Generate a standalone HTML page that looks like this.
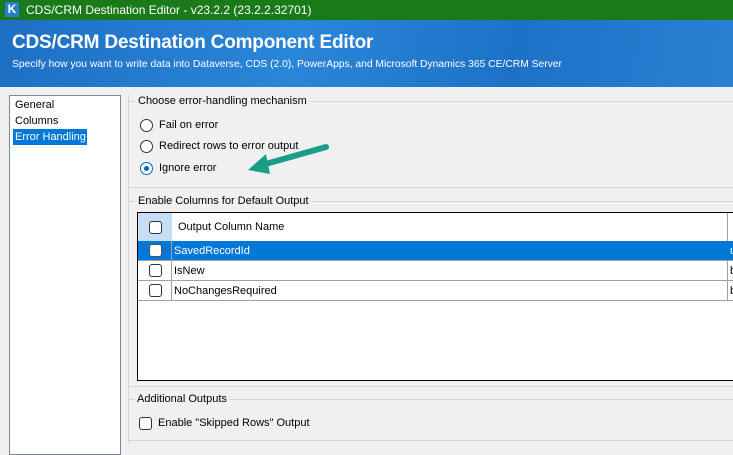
<!DOCTYPE html>
<html><head><style>
*{margin:0;padding:0;box-sizing:border-box}
body{width:733px;height:444px;overflow:hidden;background:#f0f0f0;font-family:"Liberation Sans",sans-serif;font-size:11px;color:#000;position:relative}
.a{position:absolute}
.t{position:absolute;white-space:nowrap;font-size:11px}
.radio{position:absolute;width:13px;height:13px;border:1px solid #333;border-radius:50%;background:#fff}
.cb{position:absolute;width:13px;height:13px;border:1px solid #333;border-radius:3px;background:#fff}
.hl{position:absolute;height:1px;background:#d5d5d5}
</style></head><body>
<div class="a" style="left:0;top:0;width:733px;height:20px;background:#1a7a1a"></div>
<div class="a" style="left:5px;top:2px;width:14px;height:15px;background:#2a7fd0;color:#fff;font-size:12px;font-weight:bold;text-align:center;line-height:15px">K</div>
<div class="t" style="left:26px;top:3px;color:#fff;font-size:12px">CDS/CRM Destination Editor - v23.2.2 (23.2.2.32701)</div>
<div class="a" style="left:0;top:20px;width:733px;height:67px;background:linear-gradient(100deg,#1e6fc4,#2a86d8 40%,#1d72c8 70%,#2a80d2)"></div>
<div class="t" style="left:12px;top:32px;color:#fff;font-size:19px;font-weight:bold;letter-spacing:-0.2px">CDS/CRM Destination Component Editor</div>
<div class="t" style="left:12px;top:59px;color:#fff;font-size:10.3px">Specify how you want to write data into Dataverse, CDS (2.0), PowerApps, and Microsoft Dynamics 365 CE/CRM Server</div>

<div class="a" style="left:9px;top:95px;width:112px;height:360px;background:#fff;border:1px solid #828790"></div>
<div class="t" style="left:15px;top:99px">General</div>
<div class="t" style="left:15px;top:115px">Columns</div>
<div class="a" style="left:13px;top:129px;width:74px;height:16px;background:#0078d7"></div>
<div class="t" style="left:15px;top:131px;color:#fff">Error Handling</div>

<div class="a" style="left:128px;top:95px;width:1px;height:349px;background:#d5d5d5"></div>
<div class="hl" style="left:128px;top:101px;width:605px"></div>
<div class="t" style="left:135px;top:95px;background:#f0f0f0;padding:0 3px">Choose error-handling mechanism</div>
<div class="hl" style="left:128px;top:187px;width:605px"></div>
<div class="radio" style="left:140px;top:119px"></div>
<div class="t" style="left:159px;top:119px">Fail on error</div>
<div class="radio" style="left:140px;top:140px"></div>
<div class="t" style="left:159px;top:140px">Redirect rows to error output</div>
<div class="radio" style="left:140px;top:162px;border-color:#0067c0"><div class="a" style="left:3px;top:3px;width:5px;height:5px;border-radius:50%;background:#0067c0"></div></div>
<div class="t" style="left:159px;top:162px">Ignore error</div>
<svg class="a" style="left:240px;top:138px" width="100" height="45"><path d="M86 9 L22 27" stroke="#1a9f86" stroke-width="6" stroke-linecap="round"/><path d="M8 32 L26 16 L30 36 Z" fill="#1a9f86"/></svg>

<div class="hl" style="left:128px;top:201px;width:605px"></div>
<div class="t" style="left:135px;top:195px;background:#f0f0f0;padding:0 3px">Enable Columns for Default Output</div>
<div class="a" style="left:137px;top:212px;width:600px;height:169px;background:#fff;border:1px solid #000"></div>
<div class="a" style="left:138px;top:213px;width:34px;height:28px;background:#c6def5"></div>
<div class="a" style="left:727px;top:213px;width:1px;height:87px;background:#a0a0a0"></div>
<div class="cb" style="left:149px;top:221px"></div>
<div class="t" style="left:178px;top:221px">Output Column Name</div>
<div class="a" style="left:138px;top:241px;width:595px;height:19px;background:#0078d7"></div>
<div class="a" style="left:171px;top:241px;width:1px;height:59px;background:#a0a0a0"></div>
<div class="hl" style="left:138px;top:260px;width:595px;background:#a0a0a0"></div>
<div class="hl" style="left:138px;top:280px;width:595px;background:#a0a0a0"></div>
<div class="hl" style="left:138px;top:300px;width:595px;background:#a0a0a0"></div>
<div class="cb" style="left:149px;top:244px;border-color:#555"></div>
<div class="t" style="left:174px;top:245px;color:#fff">SavedRecordId</div>
<div class="t" style="left:730px;top:245px;color:#fff">u</div>
<div class="cb" style="left:149px;top:264px"></div>
<div class="t" style="left:174px;top:265px">IsNew</div>
<div class="t" style="left:730px;top:265px">b</div>
<div class="cb" style="left:149px;top:284px"></div>
<div class="t" style="left:174px;top:285px">NoChangesRequired</div>
<div class="t" style="left:730px;top:285px">b</div>

<div class="hl" style="left:128px;top:386px;width:605px"></div>
<div class="hl" style="left:128px;top:399px;width:605px"></div>
<div class="t" style="left:135px;top:393px;background:#f0f0f0;padding:0 2px">Additional Outputs</div>
<div class="cb" style="left:139px;top:417px"></div>
<div class="t" style="left:158px;top:417px">Enable "Skipped Rows" Output</div>
<div class="hl" style="left:128px;top:440px;width:605px"></div>
</body></html>
